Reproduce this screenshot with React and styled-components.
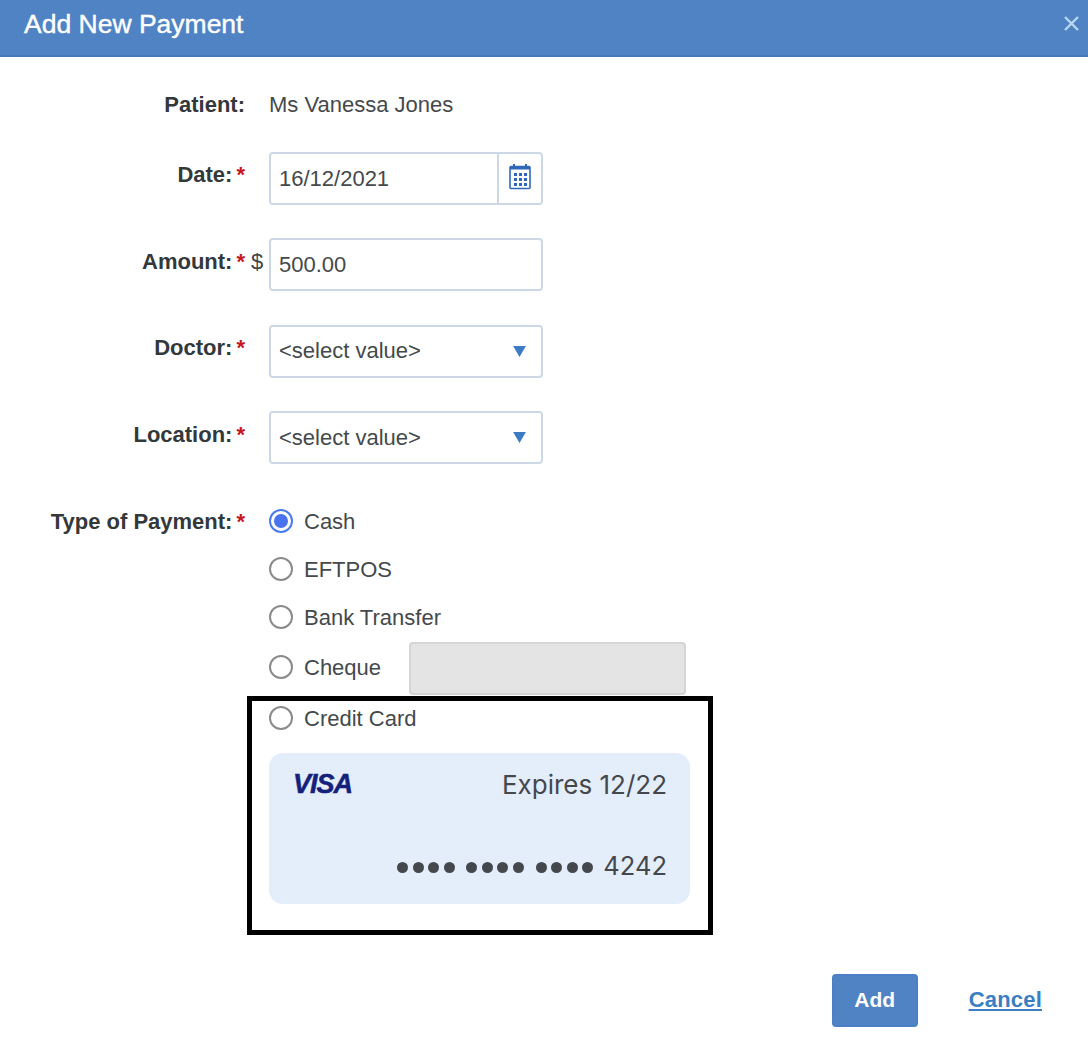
import styled, { createGlobalStyle } from 'styled-components';

const GlobalStyle = createGlobalStyle`
  html, body {
    margin: 0;
    padding: 0;
    background: #ffffff;
  }
  * {
    box-sizing: border-box;
  }
`;

const Dialog = styled.div`
  width: 1088px;
  height: 1040px;
  overflow: hidden;
  background: #ffffff;
  font-family: "Liberation Sans", Arial, sans-serif;
  font-size: 22px;
  line-height: 24px;
  color: #3f4447;
`;

const Header = styled.header`
  height: 57px;
  padding: 0 8px 8px 24px;
  display: flex;
  align-items: center;
  justify-content: space-between;
  background: #4f83c4;
  border-bottom: 2px solid #4578b8;
`;

const Title = styled.h1`
  margin: 0;
  font-size: 26.5px;
  font-weight: 400;
  color: #ffffff;
  -webkit-text-stroke: 0.4px #ffffff;
`;

const Close = styled.svg`
  width: 17px;
  height: 17px;
  stroke: #b9d8f0;
  stroke-width: 2.4;
  fill: none;
`;

const Form = styled.div`
  padding-top: 36px;
  display: flex;
  flex-direction: column;
`;

const Row = styled.div`
  display: grid;
  grid-template-columns: 245px 24px 1fr;
  margin-bottom: ${({ $gap }) => $gap}px;
`;

const Label = styled.div`
  padding-top: ${({ $top }) => $top || 0}px;
  text-align: right;
  white-space: nowrap;
  font-weight: 700;
  color: #33383b;
`;

const Star = styled.span`
  margin-left: 4px;
  color: #c8161d;
`;

const Prefix = styled.div`
  padding: 12px 0 0 6px;
`;

const Value = styled.div`
  color: #44494c;
`;

const Field = styled.div`
  width: 274px;
  height: 53px;
  padding-left: 8px;
  display: flex;
  align-items: center;
  justify-content: space-between;
  background: #ffffff;
  border: 2px solid #ccd8e6;
  border-radius: 4px;
`;

const CalendarButton = styled.div`
  width: 44px;
  height: 100%;
  padding-bottom: 4px;
  display: flex;
  align-items: center;
  justify-content: center;
  border-left: 2px solid #ccd8e6;
`;

const Caret = styled.svg`
  width: 13px;
  height: 11px;
  margin-right: 15px;
  fill: #3d7cc4;
`;

const Options = styled.div`
  display: flex;
  flex-direction: column;
`;

const Option = styled.div`
  height: ${({ $height }) => $height}px;
  margin-top: ${({ $top }) => $top || 0}px;
  display: flex;
  align-items: center;
  gap: 11px;
`;

const OptionText = styled(Value)`
  margin-top: 2px;
`;

const Radio = styled.span`
  position: relative;
  width: 24px;
  height: 24px;
  flex: none;
  border-radius: 50%;
  background: #ffffff;
  border: 2px solid ${({ $checked }) => ($checked ? '#4a7cf0' : '#8b8b8b')};

  ${({ $checked }) =>
    $checked &&
    `&::after {
      content: '';
      position: absolute;
      inset: 3px;
      border-radius: 50%;
      background: #4a73f0;
    }`}
`;

const ChequeInput = styled.div`
  width: 277px;
  height: 53px;
  margin: 3px 0 0 17px;
  background: #e4e4e4;
  border: 2px solid #d5d5d5;
  border-radius: 4px;
`;

const Highlight = styled.div`
  width: 466px;
  height: 239px;
  margin-left: -22px;
  padding: 5px 18px 0 17px;
  border: 5px solid #000000;
`;

const Card = styled.div`
  height: 151px;
  margin-top: 23px;
  padding: 16px 23px 22px 24px;
  display: flex;
  flex-direction: column;
  justify-content: space-between;
  background: #e4eefa;
  border-radius: 14px;
  font-family: Inter, "Liberation Sans", sans-serif;
  font-size: 26px;
  line-height: 32px;
  color: #44484d;
`;

const CardTop = styled.div`
  display: flex;
  align-items: center;
  justify-content: space-between;
`;

const Visa = styled.span`
  margin-top: -2px;
  font-family: "Liberation Sans", Arial, sans-serif;
  font-size: 27px;
  font-style: italic;
  font-weight: 700;
  letter-spacing: -1px;
  color: #14217a;
  -webkit-text-stroke: 0.5px #14217a;
`;

const CardNumber = styled.div`
  display: flex;
  align-items: center;
  justify-content: flex-end;
  font-size: 25.5px;
`;

const Dots = styled.span`
  margin: 4px 10px 0 0;
  display: flex;
  gap: 11.5px;
`;

const DotGroup = styled.span`
  display: flex;
  gap: 4.6px;
`;

const Dot = styled.span`
  width: 11px;
  height: 11px;
  border-radius: 50%;
  background: #44484d;
`;

const Footer = styled.div`
  margin-top: 39px;
  padding-right: 46px;
  display: flex;
  align-items: center;
  justify-content: flex-end;
  gap: 51px;
`;

const AddButton = styled.button`
  width: 86px;
  height: 53px;
  padding: 0;
  font: 700 21px "Liberation Sans", Arial, sans-serif;
  color: #ffffff;
  background: #4f83c4;
  border: 2px solid #4b80c8;
  border-radius: 4px;
`;

const CancelLink = styled.a`
  font-weight: 700;
  letter-spacing: 0.2px;
  color: #3a7fc4;
  text-decoration: underline;
`;

const CalendarIcon = () => (
  <svg width="22" height="27" viewBox="0 0 22 27" fill="none">
    <rect x="1" y="3.5" width="20" height="22" rx="1" stroke="#2f68b8" strokeWidth="1.6" />
    <rect x="1" y="3" width="20" height="3.5" fill="#2f68b8" />
    <rect x="4" y="1" width="2" height="4" fill="#2f68b8" />
    <rect x="16" y="1" width="2" height="4" fill="#2f68b8" />
    {[10, 15, 20].map((y) =>
      [5, 10, 15].map((x) => <rect key={`${x}-${y}`} x={x} y={y} width="3" height="3" fill="#2f68b8" />)
    )}
  </svg>
);

const SelectCaret = () => (
  <Caret viewBox="0 0 14 12">
    <path d="M0 0h14L7 12z" />
  </Caret>
);

const CardDots = () => (
  <Dots>
    {[0, 1, 2].map((g) => (
      <DotGroup key={g}>
        {[0, 1, 2, 3].map((d) => (
          <Dot key={d} />
        ))}
      </DotGroup>
    ))}
  </Dots>
);

export default function App() {
  return (
    <Dialog>
      <GlobalStyle />
      <Header>
        <Title>Add New Payment</Title>
        <Close viewBox="0 0 17 17">
          <path d="M2 2l13 13M15 2L2 15" />
        </Close>
      </Header>
      <Form>
        <Row $gap={35}>
          <Label>Patient:</Label>
          <span />
          <Value>Ms Vanessa Jones</Value>
        </Row>
        <Row $gap={33.4}>
          <Label $top={11}>Date:<Star>*</Star></Label>
          <span />
          <Field>
            <Value>16/12/2021</Value>
            <CalendarButton>
              <CalendarIcon />
            </CalendarButton>
          </Field>
        </Row>
        <Row $gap={33.4}>
          <Label $top={11.6}>Amount:<Star>*</Star></Label>
          <Prefix>$</Prefix>
          <Field>
            <Value>500.00</Value>
          </Field>
        </Row>
        <Row $gap={33.4}>
          <Label $top={11}>Doctor:<Star>*</Star></Label>
          <span />
          <Field>
            <Value>&lt;select value&gt;</Value>
            <SelectCaret />
          </Field>
        </Row>
        <Row $gap={44.8}>
          <Label $top={11.6}>Location:<Star>*</Star></Label>
          <span />
          <Field>
            <Value>&lt;select value&gt;</Value>
            <SelectCaret />
          </Field>
        </Row>
        <Row $gap={0}>
          <Label $top={1}>Type of Payment:<Star>*</Star></Label>
          <span />
          <Options>
            <Option $height={24}>
              <Radio $checked />
              <OptionText>Cash</OptionText>
            </Option>
            <Option $height={72}>
              <Radio />
              <OptionText>EFTPOS</OptionText>
            </Option>
            <Option $height={24}>
              <Radio />
              <OptionText>Bank Transfer</OptionText>
            </Option>
            <Option $height={58} $top={9}>
              <Radio />
              <OptionText>Cheque</OptionText>
              <ChequeInput />
            </Option>
            <Highlight>
              <Option $height={24}>
                <Radio />
                <OptionText>Credit Card</OptionText>
              </Option>
              <Card>
                <CardTop>
                  <Visa>VISA</Visa>
                  <span>Expires 12/22</span>
                </CardTop>
                <CardNumber>
                  <CardDots />
                  <span>4242</span>
                </CardNumber>
              </Card>
            </Highlight>
          </Options>
        </Row>
        <Footer>
          <AddButton>Add</AddButton>
          <CancelLink>Cancel</CancelLink>
        </Footer>
      </Form>
    </Dialog>
  );
}
